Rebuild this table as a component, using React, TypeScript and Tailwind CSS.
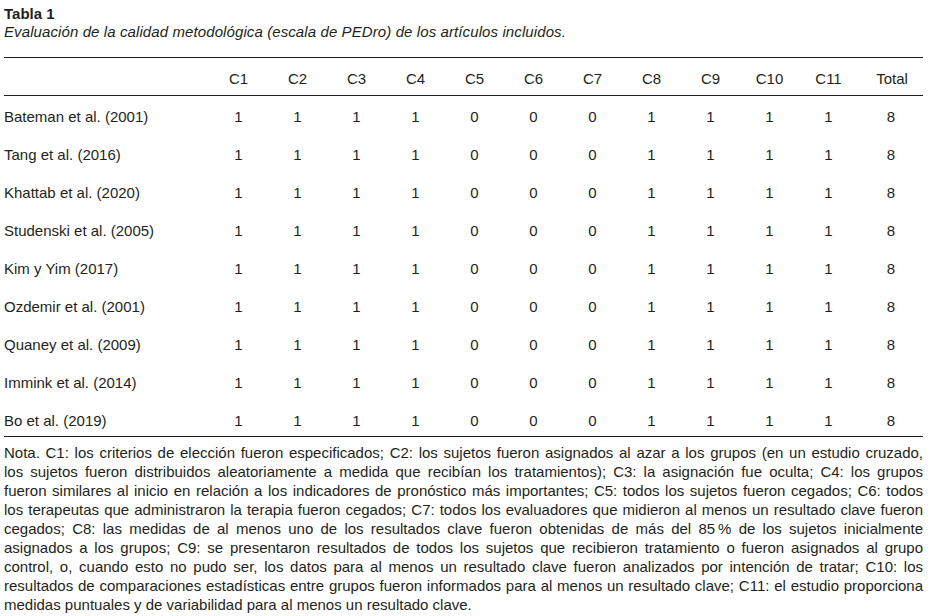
import React from "react";

const rows: [string, number[]][] = [
  ["Bateman et al. (2001)", [1, 1, 1, 1, 0, 0, 0, 1, 1, 1, 1, 8]],
  ["Tang et al. (2016)", [1, 1, 1, 1, 0, 0, 0, 1, 1, 1, 1, 8]],
  ["Khattab et al. (2020)", [1, 1, 1, 1, 0, 0, 0, 1, 1, 1, 1, 8]],
  ["Studenski et al. (2005)", [1, 1, 1, 1, 0, 0, 0, 1, 1, 1, 1, 8]],
  ["Kim y Yim (2017)", [1, 1, 1, 1, 0, 0, 0, 1, 1, 1, 1, 8]],
  ["Ozdemir et al. (2001)", [1, 1, 1, 1, 0, 0, 0, 1, 1, 1, 1, 8]],
  ["Quaney et al. (2009)", [1, 1, 1, 1, 0, 0, 0, 1, 1, 1, 1, 8]],
  ["Immink et al. (2014)", [1, 1, 1, 1, 0, 0, 0, 1, 1, 1, 1, 8]],
  ["Bo et al. (2019)", [1, 1, 1, 1, 0, 0, 0, 1, 1, 1, 1, 8]],
];

const headers = ["C1", "C2", "C3", "C4", "C5", "C6", "C7", "C8", "C9", "C10", "C11", "Total"];

const noteLines = [
  "Nota. C1: los criterios de elección fueron especificados; C2: los sujetos fueron asignados al azar a los grupos (en un estudio cruzado,",
  "los sujetos fueron distribuidos aleatoriamente a medida que recibían los tratamientos); C3: la asignación fue oculta; C4: los grupos",
  "fueron similares al inicio en relación a los indicadores de pronóstico más importantes; C5: todos los sujetos fueron cegados; C6: todos",
  "los terapeutas que administraron la terapia fueron cegados; C7: todos los evaluadores que midieron al menos un resultado clave fueron",
  "cegados; C8: las medidas de al menos uno de los resultados clave fueron obtenidas de más del 85\u202F% de los sujetos inicialmente",
  "asignados a los grupos; C9: se presentaron resultados de todos los sujetos que recibieron tratamiento o fueron asignados al grupo",
  "control, o, cuando esto no pudo ser, los datos para al menos un resultado clave fueron analizados por intención de tratar; C10: los",
  "resultados de comparaciones estadísticas entre grupos fueron informados para al menos un resultado clave; C11: el estudio proporciona",
];

export default function App() {
  return (
    <div
      className="w-[931px] h-[616px] bg-white text-[#231f20] overflow-hidden pl-[4px] pr-[8px] pt-[6px]"
      style={{ fontFamily: '"Liberation Sans", Arial, sans-serif' }}
    >
      <div className="text-[15px] leading-[16px] font-bold">Tabla 1</div>
      <div className="text-[15px] leading-[16px] italic tracking-[0.1px] mt-[2px]">
        Evaluación de la calidad metodológica (escala de PEDro) de los artículos incluidos.
      </div>

      <div className="mt-[17px] w-[919px] border-t border-[#231f20] text-[15px] leading-[16px]">
        <div className="grid grid-cols-[205px_repeat(11,59px)_65px] pt-[13px] pb-[8px] border-b border-[#231f20]">
          <div></div>
          {headers.map((h, j) => (
            <div key={h} className={j === 11 ? "text-center pl-[3px]" : "text-center"}>
              {h}
            </div>
          ))}
        </div>
        {rows.map(([name, vals], i) => (
          <div
            key={name}
            className={
              "grid grid-cols-[205px_repeat(11,59px)_65px] pt-[13px] " +
              (i === rows.length - 1 ? "pb-[7px]" : "pb-[9px]")
            }
          >
            <div>{name}</div>
            {vals.map((v, j) => (
              <div key={j} className={j === 11 ? "text-center pl-[1px]" : "text-center"}>
                {v}
              </div>
            ))}
          </div>
        ))}
        <div className="border-t border-[#231f20] pt-[6px] text-[15px] leading-[19px]">
          {noteLines.map((l, i) => (
            <div key={i} className="text-justify [text-align-last:justify] whitespace-nowrap">
              {l}
            </div>
          ))}
          <div>medidas puntuales y de variabilidad para al menos un resultado clave.</div>
        </div>
      </div>
    </div>
  );
}
